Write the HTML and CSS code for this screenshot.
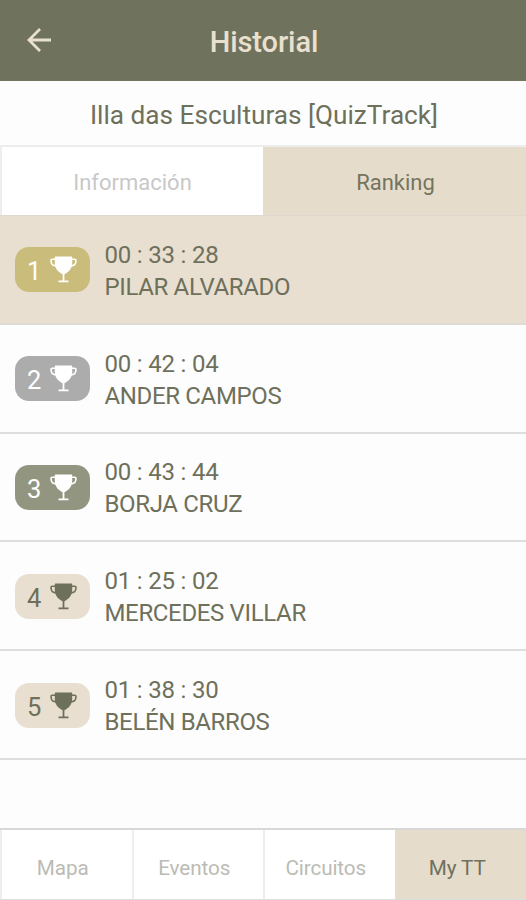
FILE: index.html
```html
<!DOCTYPE html>
<html lang="es">
<head>
<meta charset="utf-8">
<title>Historial</title>
<link rel="stylesheet" href="styles.css">
</head>
<body>
<svg class="sprite" width="0" height="0" aria-hidden="true">
  <symbol id="trophy" viewBox="0 0 27 27">
    <path d="M5 3.200H2.300Q1 3.200 1 4.600C1 8 3 10 6.500 10M22 3.200H24.700Q26 3.200 26 4.600C26 8 24 10 20.500 10" fill="none" stroke="currentColor" stroke-width="1.600"/>
    <path d="M5.500 .5H21.500Q22.200 .5 22.200 1.300V7C22.200 12 19.500 15.700 14.400 18.200V24.500H18.500V26.300H8.500V24.500H12.600V18.200C7.500 15.700 4.800 12 4.800 7V1.300Q4.800 .5 5.500 .5Z" fill="currentColor"/>
  </symbol>
</svg>
<div class="app">
  <header class="header">
    <svg class="back" viewBox="0 0 24 24"><path d="M24 12H2M13 1L2 12L13 23" fill="none" stroke="currentColor" stroke-width="2.800"/></svg>
    <h1>Historial</h1>
  </header>
  <h2 class="title"><span>Illa das Esculturas [QuizTrack]</span></h2>
  <nav class="tabs">
    <div class="tab"><span>Información</span></div>
    <div class="tab active"><span>Ranking</span></div>
  </nav>
  <main class="list">
    <div class="row own"><div class="badge gold"><span>1</span><svg><use href="#trophy"/></svg></div><div class="info"><p class="time">00 : 33 : 28</p><p>PILAR ALVARADO</p></div></div>
    <div class="row"><div class="badge silver"><span>2</span><svg><use href="#trophy"/></svg></div><div class="info"><p class="time">00 : 42 : 04</p><p>ANDER CAMPOS</p></div></div>
    <div class="row"><div class="badge bronze"><span>3</span><svg><use href="#trophy"/></svg></div><div class="info"><p class="time">00 : 43 : 44</p><p>BORJA CRUZ</p></div></div>
    <div class="row"><div class="badge"><span>4</span><svg><use href="#trophy"/></svg></div><div class="info"><p class="time">01 : 25 : 02</p><p>MERCEDES VILLAR</p></div></div>
    <div class="row"><div class="badge"><span>5</span><svg><use href="#trophy"/></svg></div><div class="info"><p class="time">01 : 38 : 30</p><p>BELÉN BARROS</p></div></div>
  </main>
  <nav class="bottom">
    <div class="item">Mapa</div>
    <div class="item">Eventos</div>
    <div class="item">Circuitos</div>
    <div class="item active">My TT</div>
  </nav>
</div>
</body>
</html>
```
FILE: styles.css
```css
* { box-sizing: border-box; }
body { margin: 0; font-family: Roboto, "Liberation Sans", sans-serif; color: #6e705b; background: #fdfdfd; }
h1, h2, p { margin: 0; font-weight: 400; }
.sprite { display: block; }
.app { height: 900px; display: flex; flex-direction: column; overflow: hidden; }
.header { height: 81px; flex: none; display: grid; grid-template-columns: 50px 1fr 48px; align-items: center; background: #6f725c; color: #eae0cf; border-bottom: 1px solid #73755f; }
.back { width: 24px; height: 24px; margin-left: 27px; }
.header h1 { text-align: center; font-size: 29px; font-weight: 500; line-height: 32px; padding-top: 3px; letter-spacing: -0.1px; }
.title { height: 64px; flex: none; padding-left: 2px; text-align: center; font-size: 26.2px; line-height: 68px; }
.tabs { height: 71px; flex: none; display: flex; border-top: 2px solid #ededed; border-bottom: 1px solid #dfd8cc; }
.tab { flex: 1; display: flex; align-items: center; justify-content: center; font-size: 22px; padding-top: 2px; color: #c8c8c8; background: #fff; border-left: 2px solid #eee; }
.tab.active { color: #74745f; background: #e5dccb; border-left-color: #e5dccb; }
.list { flex: 1; }
.row { height: 108.8px; display: flex; align-items: center; padding-left: 15px; border-bottom: 2px solid #dedede; }
.row.own { background: #e8dfd0; border-bottom-color: #dfdbd4; }
.badge { width: 75px; height: 45px; margin-top: 1px; border-radius: 14px; background: #e8dfd0; display: flex; align-items: flex-start; padding: 9px 0 0 12px; font-size: 25.5px; line-height: 30px; }
.badge span { width: 23px; }
.badge svg { width: 27px; height: 27px; }
.gold { background: #cabd7c; color: #fff; }
.silver { background: #acacac; color: #fff; }
.bronze { background: #929681; color: #fff; }
.info { margin-left: 14.5px; padding-top: 3px; font-size: 24px; letter-spacing: -0.35px; line-height: 32px; }
.time { letter-spacing: -0.2px; }
.bottom { height: 72px; flex: none; display: flex; border-top: 2px solid #d8d8d8; border-bottom: 1px solid #dedede; }
.item { flex: 1; display: flex; align-items: center; justify-content: center; padding: 8px 8px 1px 0; font-size: 20.7px; letter-spacing: -0.1px; color: #bbbbb5; background: #fff; border-left: 2px solid #eee; }
.item.active { color: #6f705d; background: #e5dccb; border-left-color: #e5dccb; }
```
